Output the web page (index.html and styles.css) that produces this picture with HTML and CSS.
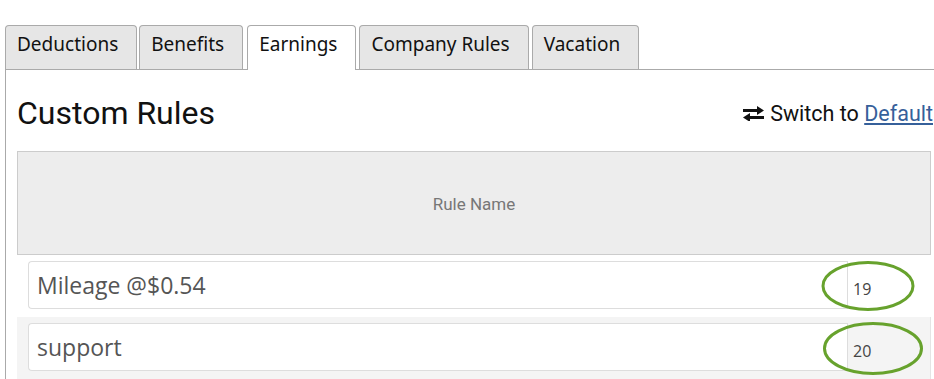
FILE: index.html
```html
<!DOCTYPE html>
<html>
<head>
<meta charset="utf-8">
<title>Custom Rules</title>
<link rel="stylesheet" href="styles.css">
</head>
<body>
<div class="page">
  <ul class="tabs">
    <li class="tab">Deductions</li>
    <li class="tab">Benefits</li>
    <li class="tab tab-active">Earnings</li>
    <li class="tab">Company Rules</li>
    <li class="tab">Vacation</li>
  </ul>
  <div class="panel">
    <div class="panel-head">
      <h2 class="title">Custom Rules</h2>
      <div class="switch">
        <svg class="switch-icon" width="21" height="15" viewBox="0 0 21 15" aria-hidden="true">
          <rect x="0" y="3" width="15" height="3" fill="#111"/>
          <polygon points="14,0 21,4.5 14,9" fill="#111"/>
          <rect x="6" y="10" width="15" height="3" fill="#111"/>
          <polygon points="7,7 0,11.5 7,16" fill="#111"/>
        </svg>
        <span>Switch to <a class="switch-link" href="#">Default</a></span>
      </div>
    </div>
    <div class="rules">
      <div class="rules-header">Rule Name</div>
      <div class="rule-row">
        <div class="rule-input">Mileage @$0.54</div>
        <div class="rule-num">19</div>
        <svg class="mark mark-1" width="96" height="54" viewBox="0 0 96 54" aria-hidden="true">
          <ellipse cx="48" cy="26" rx="45" ry="23.5" fill="none" stroke="#67a22d" stroke-width="3"/>
        </svg>
      </div>
      <div class="rule-row rule-row-alt">
        <div class="rule-input">support</div>
        <div class="rule-num">20</div>
        <svg class="mark mark-2" width="106" height="60" viewBox="0 0 106 60" aria-hidden="true">
          <ellipse cx="53" cy="29.5" rx="48.5" ry="25" fill="none" stroke="#67a22d" stroke-width="3"/>
        </svg>
      </div>
    </div>
  </div>
</div>
</body>
</html>
```
FILE: styles.css
```css
html, body {
  margin: 0;
  padding: 0;
  background: #fff;
  overflow: hidden;
}

body {
  font-family: Roboto, "Liberation Sans", sans-serif;
  color: #111;
}

.page {
  padding: 25px 0 0 5px;
}

.tabs {
  display: flex;
  align-items: flex-end;
  list-style: none;
  margin: 0;
  padding: 0;
  position: relative;
  z-index: 1;
}

.tab {
  box-sizing: border-box;
  height: 44px;
  padding: 0 18px 0 11px;
  margin-right: 3px;
  background: #e6e6e6;
  border: 1px solid #aaa;
  border-bottom: none;
  border-radius: 4px 4px 0 0;
  font-family: "Noto Sans", sans-serif;
  font-size: 19px;
  line-height: 37px;
  color: #111;
}

.tab:first-child {
  margin-right: 2px;
}

.tab-active {
  background: #fff;
  height: 45px;
  margin-bottom: -1px;
  margin-left: 1px;
}

.panel {
  border-top: 1px solid #aaa;
  border-left: 1px solid #aaa;
  padding: 0 0 40px 11px;
  width: 1000px;
}

.panel-head {
  display: flex;
  justify-content: space-between;
  align-items: center;
  width: 916px;
  margin-top: 24px;
}

.title {
  margin: 0;
  font-family: Roboto, sans-serif;
  font-weight: 400;
  font-size: 32px;
  line-height: 38px;
  color: #111;
}

.switch {
  display: flex;
  align-items: center;
  gap: 6px;
  font-size: 21.5px;
  color: #111;
}

.switch-link {
  color: #36609a;
  text-decoration: underline;
}

.rules {
  margin-top: 19px;
  width: 914px;
}

.rules-header {
  box-sizing: border-box;
  height: 104px;
  border: 1px solid #ccc;
  background: #ededed;
  display: flex;
  align-items: center;
  justify-content: center;
  font-size: 17px;
  color: #777;
  padding-top: 2px;
}

.rule-row {
  position: relative;
  display: flex;
  padding: 6px 0 8px 11px;
  background: #fff;
}

.rule-row-alt {
  background: #f4f4f4;
  border-right: 1px solid #e4e4e4;
}

.rule-input {
  box-sizing: border-box;
  width: 819px;
  height: 48px;
  background: #fff;
  border: 1px solid #ddd;
  border-right: none;
  border-radius: 4px 0 0 4px;
  padding: 0 0 0 8px;
  display: flex;
  align-items: center;
  font-family: "Open Sans", sans-serif;
  font-size: 23px;
  color: #555;
}

.rule-num {
  box-sizing: border-box;
  height: 48px;
  border-left: 1px solid #ddd;
  padding: 8px 0 0 5px;
  display: flex;
  align-items: center;
  font-family: "Open Sans", sans-serif;
  font-size: 16px;
  color: #444;
}

.mark {
  position: absolute;
  left: 803px;
}

.mark-1 {
  top: 5px;
}

.mark-2 {
  top: 2px;
}
```
